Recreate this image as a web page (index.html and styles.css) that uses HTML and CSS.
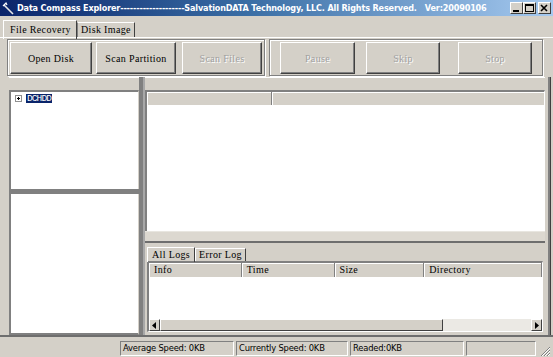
FILE: index.html
```html
<!DOCTYPE html>
<html>
<head>
<meta charset="utf-8">
<link rel="stylesheet" href="styles.css">
</head>
<body>
<div class="window">
  <div class="titlebar">
    <svg class="appicon" width="13" height="13" viewBox="0 0 13 13">
      <path d="M2 3 L11 12" stroke="#e8e8e8" stroke-width="1.6"/>
      <path d="M1 4 L4 1 L5 3" stroke="#ffffff" stroke-width="1.2" fill="none"/>
    </svg>
    <span class="title">Data Compass Explorer--------------------SalvationDATA Technology, LLC. All Rights Reserved.&nbsp;&nbsp;&nbsp;Ver:20090106</span>
    <div class="tbtns">
      <span class="tbtn"><svg width="11" height="9" viewBox="0 0 11 9"><rect x="2" y="6" width="6" height="2" fill="#000"/></svg></span>
      <span class="tbtn"><svg width="11" height="9" viewBox="0 0 11 9"><rect x="1.5" y="0.5" width="8" height="7" fill="none" stroke="#000"/><rect x="1" y="0" width="9" height="2" fill="#000"/></svg></span>
      <span class="tbtn close"><svg width="11" height="9" viewBox="0 0 11 9"><path d="M2 1 L8 7 M8 1 L2 7" stroke="#000" stroke-width="1.6"/></svg></span>
    </div>
  </div>
  <div class="tabstrip">
    <div class="tab active">File Recovery</div>
    <div class="tab">Disk Image</div>
  </div>
  <div class="page">
    <div class="toolbar">
      <div class="group g1">
        <div class="btn b1">Open Disk</div>
        <div class="btn b2">Scan Partition</div>
        <div class="btn b3 dis">Scan Files</div>
      </div>
      <div class="group g2">
        <div class="btn b4 dis">Pause</div>
        <div class="btn b5 dis">Skip</div>
        <div class="btn b6 dis">Stop</div>
      </div>
    </div>
    <div class="main">
      <div class="leftcol">
        <div class="strip"></div>
        <div class="tree">
          <div class="node"><span class="plus"></span><span class="sel">DCHDD</span></div>
        </div>
        <div class="hsplit"></div>
        <div class="lower"></div>
      </div>
      <div class="vsplit"></div>
      <div class="rightcol">
        <div class="strip"></div>
        <div class="toplist">
          <div class="lhead"><div class="hcol c0"></div><div class="hcol cfill"></div></div>
          <div class="lbody"></div>
        </div>
        <div class="band"></div>
        <div class="hsplit2"></div>
        <div class="logtabs">
          <div class="ltab active">All Logs</div>
          <div class="ltab">Error Log</div>
        </div>
        <div class="loglist">
          <div class="lhead">
            <div class="hcol info">Info</div>
            <div class="hcol time">Time</div>
            <div class="hcol size">Size</div>
            <div class="hcol dir">Directory</div>
          </div>
          <div class="lbody"></div>
          <div class="hscroll">
            <div class="sbtn"><svg width="5" height="7" viewBox="0 0 5 7"><path d="M4 0 L0 3.5 L4 7Z" fill="#000"/></svg></div>
            <div class="thumb"></div>
            <div class="track"></div>
            <div class="sbtn"><svg width="5" height="7" viewBox="0 0 5 7"><path d="M1 0 L5 3.5 L1 7Z" fill="#000"/></svg></div>
          </div>
        </div>
      </div>
      <div class="frame-r"></div>
    </div>
  </div>
  <div class="statusbar">
    <div class="sp s0"></div>
    <div class="sp s1">Average Speed: 0KB</div>
    <div class="sp s2">Currently Speed: 0KB</div>
    <div class="sp s3">Readed:0KB</div>
    <div class="sp s4"></div>
    <svg class="grip" width="12" height="12" viewBox="0 0 12 12">
      <path d="M11 2 L2 11 M11 5 L5 11 M11 8 L8 11" stroke="#808080" stroke-width="1"/>
      <path d="M11 3 L3 11 M11 6 L6 11 M11 9 L9 11" stroke="#ffffff" stroke-width="1"/>
    </svg>
  </div>
</div>
</body>
</html>
```
FILE: styles.css
```css
* { box-sizing: border-box; }
html, body { margin: 0; padding: 0; }
body { background: #d4d0c8; width: 553px; height: 357px; overflow: hidden; }
.window { width: 553px; height: 357px; display: flex; flex-direction: column; background: #d4d0c8; }

.titlebar {
  height: 16px; display: flex; align-items: center;
  background: linear-gradient(to right, #0a246a 0%, #3a6ea5 45%, #a6caf0 100%);
  padding-left: 2px;
}
.appicon { flex: none; margin-right: 2px; }
.title {
  font-family: "DejaVu Sans", sans-serif; font-weight: bold; font-size: 8.1px;
  color: #fff; white-space: nowrap; letter-spacing: -0.15px;
}
.tbtns { margin-left: auto; display: flex; margin-right: 2px; }
.tbtn {
  width: 13px; height: 12px; background: #d4d0c8; display: flex; align-items: center; justify-content: center;
  border-top: 1px solid #fff; border-left: 1px solid #fff; border-right: 1px solid #404040; border-bottom: 1px solid #404040;
}
.tbtn.close { margin-left: 2px; }

.tab, .btn, .hcol, .ltab {
  font-family: "Liberation Serif", serif; font-size: 10px; letter-spacing: 0.35px; color: #000;
}

.tabstrip { height: 21px; display: flex; align-items: flex-end; padding-left: 3px; }
.tab {
  height: 15px; line-height: 14px; padding: 0 3px;
  border-top: 1px solid #fff; border-right: 1px solid #404040; border-left: 1px solid #fff;
}
.tab.active { height: 19px; line-height: 18px; padding: 0 5px 0 6px; position: relative; top: 2px; }
.tab + .tab { border-left: 1px solid #808080; }

.page {
  flex: none; height: 298px; border-top: 1px solid #fff; display: flex; flex-direction: column;
}
.toolbar { height: 38px; display: flex; padding: 1px 0 0 7px; gap: 4px; }
.group {
  height: 37px; border: 1px solid #808080; box-shadow: inset 1px 1px 0 #fff, 1px 1px 0 #fff;
  display: flex; padding: 2px 0 0 2px;
}
.g1 { width: 258px; }
.g2 { width: 274px; }
.btn {
  height: 32px; display: flex; align-items: center; justify-content: center;
  border-top: 1px solid #fff; border-left: 1px solid #fff; border-right: 1px solid #404040; border-bottom: 1px solid #404040;
  box-shadow: inset -1px -1px 0 #808080;
}
.btn.dis { color: #a0a0a0; text-shadow: 1px 1px 0 #fff; }
.b1 { width: 82px; }
.b2 { width: 80px; margin-left: 4px; }
.b3 { width: 80px; margin-left: 6px; }
.b4 { width: 75px; margin-left: 8px; }
.b5 { width: 74px; margin-left: 11px; }
.b6 { width: 74px; margin-left: 18px; }

.main { flex: 1; display: flex; padding: 1px 0 0 9px; }
.leftcol { width: 130px; display: flex; flex-direction: column; }
.strip { height: 13px; border-top: 1px solid #fff; }
.tree {
  height: 99px; background: #fff; border-top: 2px solid #808080; border-left: 2px solid #808080; border-right: 1px solid #d4d0c8;
  padding: 2px 0 0 4px;
}
.node { display: flex; align-items: center; height: 9px; }
.plus {
  width: 7px; height: 7px; border: 1px solid #909090; position: relative; margin-right: 4px;
}
.plus::before { content: ""; position: absolute; left: 1px; top: 2px; width: 3px; height: 1px; background: #000; }
.plus::after { content: ""; position: absolute; left: 2px; top: 1px; width: 1px; height: 3px; background: #000; }
.sel {
  background: #0a246a; color: #fff; font-family: "Liberation Mono", monospace; font-size: 9.5px; letter-spacing: -0.9px;
  line-height: 9px; padding: 0 1px;
}
.hsplit { height: 5px; background: #808080; }
.lower { height: 141px; background: #fff; border-left: 2px solid #808080; border-right: 1px solid #d4d0c8; border-bottom: 2px solid #808080; }
.vsplit { width: 6px; background: #808080; border-right: 2px solid #a8a8a8; }

.rightcol { width: 400px; display: flex; flex-direction: column; }
.toplist { height: 141px; display: flex; flex-direction: column; border-top: 2px solid #808080; border-left: 2px solid #808080; border-right: 1px solid #fff; }
.lhead { height: 13px; display: flex; background: #d4d0c8; flex: none; }
.hcol {
  height: 100%; border-right: 1px solid #808080; box-shadow: inset 1px 1px 0 #fff;
  line-height: 13px; padding-left: 5px;
}
.c0 { width: 125px; }
.cfill { flex: 1; border-right: none; }
.lbody { flex: 1; background: #fff; }
.band { height: 10px; background: #dcd8d0; border-top: 1px solid #e8e6e0; }
.hsplit2 { height: 2px; background: #6e6e6e; }
.logtabs { height: 18px; display: flex; align-items: flex-end; padding-left: 2px; }
.ltab {
  height: 13px; line-height: 12px; padding: 0 3px; border-top: 1px solid #fff; border-left: 1px solid #fff; border-right: 1px solid #404040;
}
.ltab.active { height: 15px; line-height: 14px; padding: 0 4px; position: relative; top: 1px; }
.loglist {
  height: 71px; margin-left: 2px; width: 396px; display: flex; flex-direction: column;
  border-top: 2px solid #808080; border-left: 2px solid #808080; border-right: 1px solid #fff; border-bottom: 1px solid #fff;
}
.loglist .lhead { height: 14px; }
.loglist .hcol { line-height: 14px; }
.info { width: 93px; }
.time { width: 93px; }
.size { width: 90px; }
.dir { width: 118px; }
.hscroll { height: 12px; display: flex; flex: none; background: #fff; }
.sbtn {
  width: 11px; height: 12px; background: #d4d0c8; display: flex; align-items: center; justify-content: center;
  border-top: 1px solid #fff; border-left: 1px solid #fff; border-right: 1px solid #404040; border-bottom: 1px solid #404040;
}
.thumb { width: 283px; background: #d4d0c8; border-top: 1px solid #fff; border-left: 1px solid #fff; border-right: 1px solid #404040; border-bottom: 1px solid #404040; }
.track { flex: 1; background: #ebe9e4; }
.frame-r { width: 3px; margin-left: 3px; background: #808080; border-right: 1px solid #404040; }

.statusbar { height: 22px; display: flex; align-items: center; padding: 2px 2px 0 2px; border-top: 2px solid #6e6e6e; }
.sp {
  height: 15px; border-top: 1px solid #808080; border-left: 1px solid #808080; border-bottom: 1px solid #fff; border-right: 1px solid #fff;
  font-family: "DejaVu Sans", sans-serif; font-size: 8.4px; color: #000; line-height: 13px; padding-left: 2px; white-space: nowrap;
  margin-right: 2px; letter-spacing: -0.2px;
}
.s0 { width: 116px; border: none; }
.s1 { width: 114px; }
.s2 { width: 112px; }
.s3 { width: 114px; }
.s4 { width: 70px; }
.grip { margin-left: auto; align-self: flex-end; }
```
